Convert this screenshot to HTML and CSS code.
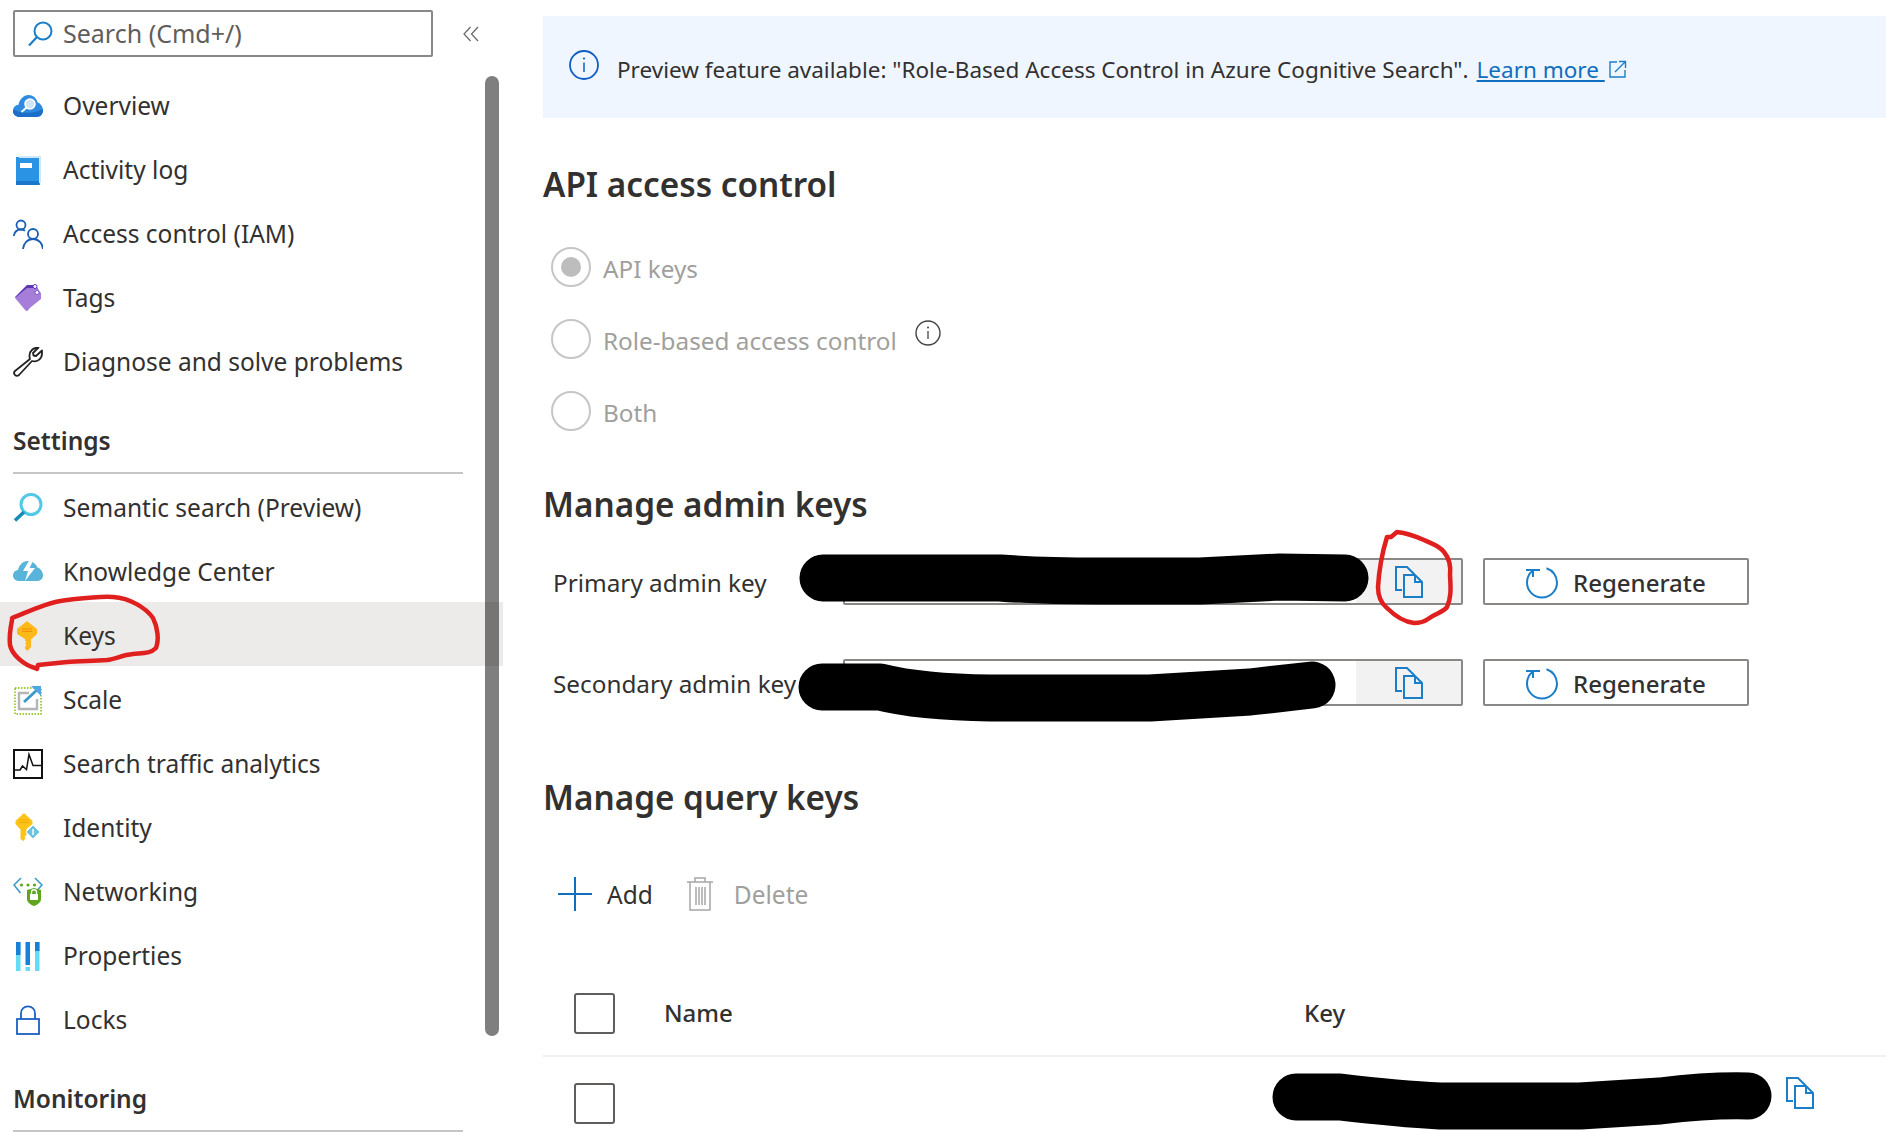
FILE: index.html
```html
<!DOCTYPE html>
<html lang="en">
<head>
<meta charset="utf-8">
<title>Keys</title>
<link rel="stylesheet" href="styles.css">
</head>
<body>
<svg width="0" height="0" class="defs">
  <symbol id="copy" viewBox="0 0 28 32">
    <path d="M7 24H1V1h11l7 7v1" fill="none" stroke="currentColor" stroke-width="2"/>
    <path d="M9 9h11l7 7v15H9z" fill="none" stroke="currentColor" stroke-width="2"/>
    <path d="M20 9v7h7" fill="none" stroke="currentColor" stroke-width="2"/>
  </symbol>
  <symbol id="regen" viewBox="0 0 34 34">
    <path d="M21.500 3.200C27.700 5.200 32 11 32 17.500 32 25.800 25.300 32.500 17 32.500S2 25.800 2 17.500C2 12.800 4.200 8.500 7.800 5.800" fill="none" stroke="currentColor" stroke-width="2"/>
    <path d="M8 12V5H1M8 5h7" fill="none" stroke="currentColor" stroke-width="2"/>
  </symbol>
</svg>

<div class="page">
  <aside class="sidebar">
    <div class="search-row">
      <label class="search">
        <svg class="search-icon" viewBox="0 0 26 26"><circle cx="16" cy="10" r="8.500" fill="none" stroke="#1a7fc8" stroke-width="2"/><path d="M10 16 2 24.500" stroke="#1a7fc8" stroke-width="2.200" fill="none"/></svg>
        <span class="search-text">Search (Cmd+/)</span>
      </label>
      <svg class="collapse" viewBox="0 0 16 16"><path d="M7.500 1 1 8l6.500 7M15 1 8.500 8l6.500 7" fill="none" stroke="#666" stroke-width="1.200"/></svg>
    </div>

    <nav class="group">
      <a class="item">
        <svg class="ico" viewBox="0 0 30 30"><path d="M7 26C3 26 0 23.500 0 20s2.500-6 5.500-6.200C6.500 8.500 10.500 4 15.500 4c4.500 0 8 3 9.200 7.500C27.500 12.500 30 15.500 30 19.500c0 3.700-3 6.500-6.500 6.500z" fill="#2f8be0"/><path d="M0 20c0 3.500 3 6 7 6h16.500c3.500 0 6.500-2.800 6.500-6.500 0-.5 0-1-.1-1.500C20 23 10 23 .2 18.500z" fill="#1c6ec7"/><circle cx="17" cy="13" r="5" fill="#cfe6fa" stroke="#fff" stroke-width="1.600"/><path d="M13.500 16.500 8.500 21" stroke="#fff" stroke-width="2"/></svg>
        <span>Overview</span>
      </a>
      <a class="item">
        <svg class="ico" viewBox="0 0 30 30"><path d="M3 2h24v28H3z" fill="#2b93e3"/><path d="M6 1h22v27h-2V3H6z" fill="#cde7fb"/><path d="M3 26h23v4H3z" fill="#1a76c9"/><rect x="7" y="8" width="12" height="5" fill="#fff"/></svg>
        <span>Activity log</span>
      </a>
      <a class="item">
        <svg class="ico" viewBox="0 0 30 30"><g fill="none" stroke="#1a5fb4" stroke-width="1.800"><circle cx="8" cy="6" r="4.500"/><path d="M.7 17C1.500 13 4.500 10.500 8 10.500c1.500 0 3 .5 4 1.200"/><circle cx="20" cy="15" r="5"/><path d="M10 30c.5-5.500 4.500-10 10-10s9.500 4.500 10 10"/></g></svg>
        <span>Access control (IAM)</span>
      </a>
      <a class="item">
        <svg class="ico" viewBox="0 0 30 30"><path d="M2 14 14 2h9l3 6v6L14 28z" fill="#5d35b5"/><path d="M2 15 14 5h10l4 5v6L13 28z" fill="#a67ed9"/><circle cx="22" cy="3.500" r="2" fill="#fff" stroke="#5d35b5"/><circle cx="24" cy="9.500" r="2" fill="#fff" stroke="#7d56c4"/></svg>
        <span>Tags</span>
      </a>
      <a class="item">
        <svg class="ico" viewBox="0 0 30 30"><path d="M29 3.500 23 9l-2.500-.5L20 6l5.500-5.500C21 .5 16 3.500 16.500 9.500c0 1 .2 1.800.5 2.500L2 24c-2.500 2.500 1 6.500 4 4l13-14c5 1.500 10-2 10-7.500z" fill="none" stroke="#222" stroke-width="1.800" stroke-linejoin="round"/></svg>
        <span>Diagnose and solve problems</span>
      </a>
    </nav>

    <h3 class="group-head">Settings</h3>
    <nav class="group group-settings">
      <a class="item">
        <svg class="ico" viewBox="0 0 30 30"><circle cx="18" cy="11.500" r="10" fill="none" stroke="#50c8e8" stroke-width="3"/><path d="M11 19 2 27.500" stroke="#198ab3" stroke-width="3.600"/></svg>
        <span>Semantic search (Preview)</span>
      </a>
      <a class="item">
        <svg class="ico" viewBox="0 0 30 30"><path d="M6 24C2.500 24 0 21.500 0 18.500c0-3 2.300-5.300 5-5.500C6 8 10 4 14.500 4c4 0 8 2 10 6.500 3 1 5.500 4 5.500 8 0 3-2.500 5.500-6 5.500z" fill="#59b4d9"/><path d="M17 2l-7 12h5l-3 10 10-13h-5.500l4.500-9z" fill="#fff"/></svg>
        <span>Knowledge Center</span>
      </a>
      <a class="item active">
        <svg class="ico" viewBox="0 0 30 30"><path d="M14 0 24 8v5l-6 5.500V26l-3.500 4-2.500-2.500v-2l1.500-1.500-1.500-1.500 1.500-1.500-1.500-1.500v-1.500L4 13V8z" fill="#fdb91a"/><path d="M9 8h10M9 10.500h10" stroke="#f08a00" stroke-width=".9"/></svg>
        <span>Keys</span>
      </a>
      <a class="item">
        <svg class="ico" viewBox="0 0 30 30"><rect x="2" y="3" width="26" height="26" fill="none" stroke="#7fba00" stroke-width="1.400" stroke-dasharray="1.500 1.500"/><path d="M16 8H6v16h18V14" fill="none" stroke="#b5b5b5" stroke-width="2.400"/><path d="M11 17 25 4" stroke="#3999c6" stroke-width="2.800"/><path d="M18 1h10v10z" fill="#50a8e0"/></svg>
        <span>Scale</span>
      </a>
      <a class="item">
        <svg class="ico" viewBox="0 0 30 30"><rect x="1" y="1" width="28" height="28" fill="none" stroke="#111" stroke-width="2"/><path d="M1 21h6l2.500-4 4 3.500 2.500-15 4 11h9" fill="none" stroke="#111" stroke-width="1.500"/></svg>
        <span>Search traffic analytics</span>
      </a>
      <a class="item">
        <svg class="ico" viewBox="0 0 30 30"><path d="M11 0l8.500 8v3l-6 5v6l-2 1.500 1 1.500-2 3-3-2v-9.500L2.500 11V8z" fill="#fcc418"/><path d="M6 7h10M6 9.500h10" stroke="#f5a800"/><path d="M20 12l7 7-7 7-7-7z" fill="#6cc3e4" stroke="#fff"/><path d="M20 16v6" stroke="#fff" stroke-width="1.500"/></svg>
        <span>Identity</span>
      </a>
      <a class="item">
        <svg class="ico" viewBox="0 0 30 30"><path d="M8 1 1 8l6.500 8M22 1l7 7-4.500 5" fill="none" stroke="#3999c6" stroke-width="1.500"/><circle cx="8.500" cy="8" r="1.600" fill="#5ea61e"/><circle cx="15" cy="8" r="1.600" fill="#5ea61e"/><circle cx="21.500" cy="8" r="1.600" fill="#5ea61e"/><path d="M14 13l7-2 7 2v9c0 3-3 5.500-7 7-4-1.500-7-4-7-7z" fill="#5ea61e"/><rect x="17" y="17" width="8" height="6" fill="#fff"/><path d="M18.500 17v-2c0-3 5-3 5 0v2" fill="none" stroke="#fff" stroke-width="1.300"/></svg>
        <span>Networking</span>
      </a>
      <a class="item">
        <svg class="ico" viewBox="0 0 30 30"><rect x="3" y="1" width="4.500" height="29" rx=".5" fill="#62dcf7"/><rect x="3" y="1" width="4.500" height="13" fill="#1a7fd6"/><rect x="12.500" y="1" width="4.500" height="23" fill="#1a7fd6"/><rect x="12.500" y="26" width="4.500" height="4" fill="#62dcf7"/><rect x="22" y="1" width="4.500" height="29" rx=".5" fill="#62dcf7"/><rect x="22" y="1" width="4.500" height="9" fill="#1a7fd6"/></svg>
        <span>Properties</span>
      </a>
      <a class="item">
        <svg class="ico" viewBox="0 0 30 30"><rect x="4" y="14" width="22" height="15" fill="none" stroke="#1a5fc4" stroke-width="1.800"/><path d="M8 14V8.500c0-9.500 14-9.500 14 0V14" fill="none" stroke="#1a5fc4" stroke-width="1.800"/></svg>
        <span>Locks</span>
      </a>
    </nav>

    <h3 class="group-head">Monitoring</h3>
    <div class="scrollbar"></div>
  </aside>

  <main class="content">
    <div class="banner">
      <svg class="banner-icon" viewBox="0 0 30 30"><circle cx="15" cy="15" r="14" fill="none" stroke="#0f5fc2" stroke-width="1.800"/><path d="M15 12.500V22" stroke="#0f5fc2" stroke-width="1.500"/><circle cx="15" cy="8.500" r="1.100" fill="#0f5fc2"/></svg>
      <span class="banner-text">Preview feature available: "Role-Based Access Control in Azure Cognitive Search".</span>
      <a class="link">Learn more </a>
      <svg class="ext-icon" viewBox="0 0 18 18"><path d="M8 2H1v15h15v-7" fill="none" stroke="#1a7fc8" stroke-width="1.400"/><path d="M6 12 16 2M10 1.500h6.500V8" fill="none" stroke="#1a7fc8" stroke-width="1.400"/></svg>
    </div>

    <h2 class="title title-first">API access control</h2>
    <div class="radios">
      <div class="radio-row"><span class="radio checked"></span><span class="radio-label">API keys</span></div>
      <div class="radio-row"><span class="radio"></span><span class="radio-label">Role-based access control</span>
        <svg class="mini-info" viewBox="0 0 26 26"><circle cx="13" cy="13" r="12" fill="none" stroke="#444" stroke-width="1.400"/><path d="M13 11v8" stroke="#444" stroke-width="1.300"/><circle cx="13" cy="7.500" r="1" fill="#444"/></svg>
      </div>
      <div class="radio-row"><span class="radio"></span><span class="radio-label">Both</span></div>
    </div>

    <h2 class="title title-admin">Manage admin keys</h2>
    <div class="key-row">
      <span class="key-label">Primary admin key</span>
      <div class="field"><span class="field-value"></span><span class="field-copy"><svg class="copy-icon"><use href="#copy"/></svg></span></div>
      <button class="regen"><svg class="regen-icon"><use href="#regen"/></svg><span>Regenerate</span></button>
    </div>
    <div class="key-row key-row-second">
      <span class="key-label">Secondary admin key</span>
      <div class="field"><span class="field-value"></span><span class="field-copy"><svg class="copy-icon"><use href="#copy"/></svg></span></div>
      <button class="regen"><svg class="regen-icon"><use href="#regen"/></svg><span>Regenerate</span></button>
    </div>

    <h2 class="title title-query">Manage query keys</h2>
    <div class="toolbar">
      <span class="tool"><svg class="plus" viewBox="0 0 34 34"><path d="M17 0v34M0 17h34" stroke="#106ebe" stroke-width="2"/></svg><span>Add</span></span>
      <span class="tool tool-off"><svg class="trash" viewBox="0 0 26 34"><path d="M0 5h26M8 5V1h10v4M3 5v28h20V5M9 10v18M12 10v18M15 10v18M18 10v18" fill="none" stroke="#a6a6a6" stroke-width="1.500"/></svg><span>Delete</span></span>
    </div>
    <div class="table">
      <div class="table-row table-head">
        <span class="check"></span>
        <span class="cell-strong">Name</span>
        <span class="cell-strong cell-key">Key</span>
      </div>
      <div class="table-row table-body">
        <span class="check"></span>
        <span></span>
        <span class="cell-copy"><svg class="copy-icon"><use href="#copy"/></svg></span>
      </div>
    </div>
  </main>

  <svg class="marks" viewBox="0 0 1886 1132" width="1886" height="1132">
    <g fill="none" stroke="#000" stroke-width="47" stroke-linecap="round" stroke-linejoin="round">
      <path d="M823 578H1000Q1040 581 1100 581H1200L1280 577 1345 578"/>
      <path d="M822 687H880Q920 697 990 698H1150L1250 692 1312 685"/>
      <path d="M1296 1097H1340Q1400 1104 1440 1106H1580L1660 1101Q1710 1095 1748 1096"/>
    </g>
    <g fill="none" stroke="#e0201f" stroke-width="4.500" stroke-linecap="round" stroke-linejoin="round">
      <path d="M12 618C30 611 48 602 67 600 85 598 100 596 113 597 130 598 146 608 153 618 158 628 159 640 156 648 150 654 142 653 133 654 122 655 116 659 107 660 90 661 78 661 67 662L38 665 37 669"/>
      <path d="M12 620C10 630 9 637 10 645 12 655 24 665 35 668"/>
      <path d="M1397 532 1391 537 1387 537C1383 550 1379 570 1378 587 1378 597 1382 604 1387 608 1395 616 1405 622 1414 623 1420 623 1424 622 1428 619 1434 614 1444 612 1447 607 1451 598 1451 590 1450 575 1451 566 1449 558 1444 552 1440 546 1430 543 1424 540 1415 536 1405 533 1397 532Z"/>
    </g>
  </svg>
</div>
</body>
</html>
```

FILE: styles.css
```css
* { box-sizing: border-box; }
html, body { margin: 0; padding: 0; background: #fff; }
body { font-family: "Noto Sans", "Open Sans", sans-serif; color: #323130; overflow: hidden; }
.defs { position: absolute; }
.page { position: relative; display: flex; width: 1886px; height: 1132px; overflow: hidden; }
.marks { position: absolute; left: 0; top: 0; pointer-events: none; }

/* sidebar */
.sidebar { position: relative; flex: 0 0 503px; width: 503px; }
.search-row { display: flex; align-items: center; padding: 10px 0 0 13px; height: 74px; padding-bottom: 17px; }
.search { display: flex; align-items: center; width: 420px; height: 47px; border: 2px solid #8a8886; border-radius: 2px; padding-left: 12px; }
.search-icon { width: 26px; height: 26px; flex: none; }
.search-text { margin: -2px 0 0 10px; font-size: 25px; color: #605e5c; }
.collapse { width: 16px; height: 16px; margin-left: 30px; }
.item { display: flex; align-items: center; height: 64px; padding-left: 13px; font-size: 24.500px; color: #323130; }
.item span { margin-top: -2px; }
.ico { width: 30px; height: 30px; flex: none; margin-right: 20px; }
.item.active { background: #edebe9; }
.group-settings { margin-bottom: 2px; }
.group-settings .item { padding-top: 3px; }
.group-settings .item span { margin-top: 0; }
.group-head { margin: 0; height: 80px; padding: 30px 0 0 0; margin-left: 13px; width: 450px; border-bottom: 2px solid #c8c6c4; font-size: 24.500px; line-height: 34px; font-weight: 600; color: #323130; }
.scrollbar { position: absolute; left: 485px; top: 76px; width: 14px; height: 960px; border-radius: 7px; background: rgba(0, 0, 0, .5); }

/* content */
.content { flex: 1; min-width: 0; padding: 16px 0 0 40px; }
.banner { display: flex; align-items: center; height: 102px; background: #eff6ff; padding-left: 26px; font-size: 22.500px; white-space: nowrap; }
.banner-icon { width: 30px; height: 30px; flex: none; margin: -4px 18px 0 0; }
.banner-text { margin-top: 4px; color: #323130; }
.link { margin: 4px 0 0 8px; color: #106ebe; text-decoration: underline; white-space: pre; }
.ext-icon { width: 18px; height: 18px; margin: 4px 0 0 4px; }
.title { margin: 0; height: 44px; font-size: 33.300px; line-height: 44px; font-weight: 600; color: #323130; white-space: nowrap; }
.title-first { margin-top: 44px; }
.title-admin { margin-top: 34px; }
.title-query { margin-top: 69px; }
.radios { margin-top: 26px; }
.radio-row { display: flex; align-items: center; height: 72px; padding-left: 8px; }
.radio { position: relative; width: 40px; height: 40px; border: 2px solid #c8c6c4; border-radius: 50%; margin-top: -3px; flex: none; }
.radio.checked::after { content: ""; position: absolute; inset: 8px; border-radius: 50%; background: #bdbdbd; }
.radio-label { margin-left: 12px; font-size: 24.300px; color: #a19f9d; white-space: nowrap; }
.mini-info { width: 26px; height: 26px; margin: -14px 0 0 18px; }
.key-row { display: flex; align-items: stretch; height: 47px; margin-top: 32px; }
.key-row-second { margin-top: 54px; }
.key-label { flex: 0 0 300px; padding-left: 10px; font-size: 24.300px; line-height: 50px; color: #323130; white-space: nowrap; }
.field { display: flex; flex: 0 0 620px; border: 2px solid #8a8886; border-radius: 2px; }
.field-value { flex: 1; }
.field-copy { display: flex; align-items: center; justify-content: center; width: 105px; background: #f2f2f2; color: #1a7fc8; }
.copy-icon { width: 28px; height: 32px; color: #1a7fc8; }
.regen { display: flex; align-items: center; flex: 0 0 266px; margin-left: 20px; padding: 2px 0 0 40px; background: #fff; border: 2px solid #8a8886; border-radius: 2px; font-family: inherit; font-size: 24px; font-weight: 500; color: #323130; }
.regen-icon { width: 34px; height: 34px; color: #1a7fc8; flex: none; margin: -2px 14px 0 0; }
.toolbar { display: flex; align-items: center; height: 60px; margin-top: 45px; padding-left: 15px; }
.tool { display: flex; align-items: center; font-size: 24.500px; color: #323130; }
.plus { width: 34px; height: 34px; margin-right: 15px; }
.tool-off { margin-left: 34px; color: #a19f9d; }
.trash { width: 26px; height: 34px; margin-right: 21px; }
.table { margin-top: 47px; }
.table-row { display: grid; grid-template-columns: 121px 640px 1fr; align-items: center; }
.table-head { height: 86px; border-bottom: 2px solid #f0f0f0; }
.table-body { height: 92px; }
.check { width: 41px; height: 41px; margin-left: 31px; border: 2px solid #605e5c; border-radius: 3px; }
.cell-strong { margin-top: -2px; font-size: 24px; font-weight: 500; color: #323130; }
.cell-copy { display: flex; margin-left: 482px; margin-top: -20px; }
```
